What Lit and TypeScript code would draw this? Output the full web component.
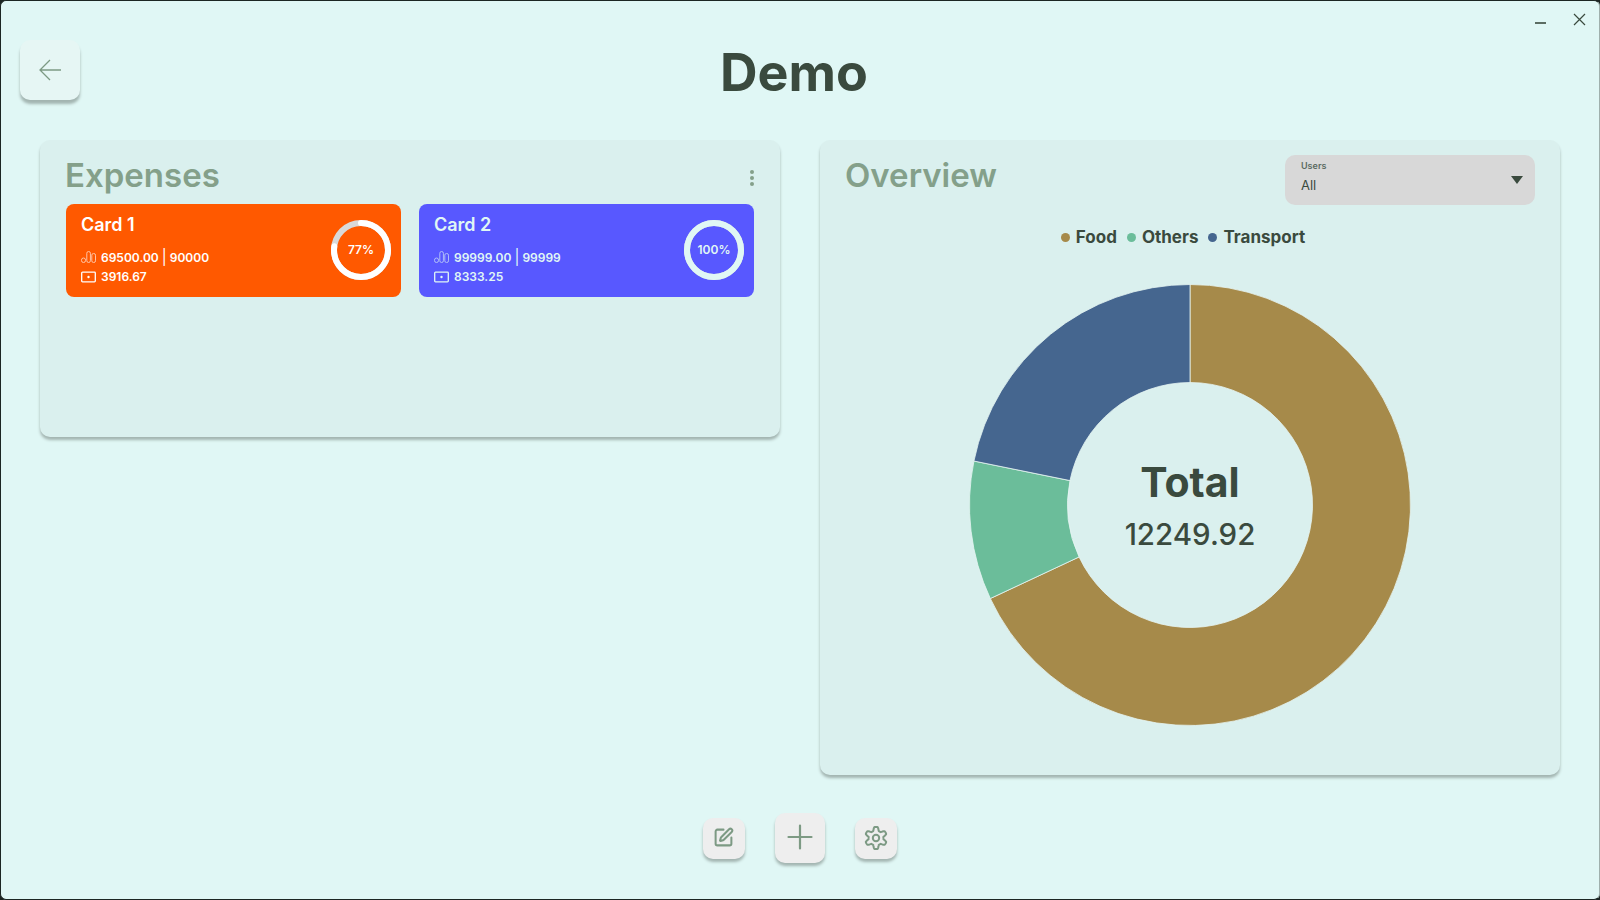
import { LitElement, css, html, svg } from 'lit';
import { customElement } from 'lit/decorators.js';

const slices = [
  { name: 'Food', color: '#a68a4a', from: 0, to: 244.9 },
  { name: 'Others', color: '#6bbd9a', from: 244.9, to: 281.5 },
  { name: 'Transport', color: '#45668f', from: 281.5, to: 360 },
];

const cards = [
  { name: 'Card 1', color: '#ff5900', fg: '#ffffff', used: '69500.00', limit: '90000', left: '3916.67', pct: 77 },
  { name: 'Card 2', color: '#5858ff', fg: '#e0f7f5', used: '99999.00', limit: '99999', left: '8333.25', pct: 100 },
];

function polar(r: number, deg: number) {
  const a = (deg * Math.PI) / 180;
  return `${(r * Math.sin(a)).toFixed(2)} ${(-r * Math.cos(a)).toFixed(2)}`;
}

function arc(from: number, to: number) {
  const R = 220.5;
  const r = 122.5;
  const large = to - from > 180 ? 1 : 0;
  return `M${polar(R, from)}A${R} ${R} 0 ${large} 1 ${polar(R, to)}L${polar(r, to)}A${r} ${r} 0 ${large} 0 ${polar(r, from)}Z`;
}

// six lobed cog outline, lobes flattened at the tips
function cog() {
  const pts: string[] = [];
  for (let d = 0; d < 360; d += 3) {
    const wave = Math.max(-1, Math.min(1, 1.6 * Math.cos((6 * d * Math.PI) / 180)));
    pts.push(polar(9.2 + 1.8 * wave, d));
  }
  return `M${pts.join('L')}Z`;
}

@customElement('app-root')
export class AppRoot extends LitElement {
  static styles = css`
    :host {
      display: block;
      width: 1600px;
      height: 900px;
      background: #1c2623;
      font-family: Inter, 'Liberation Sans', sans-serif;
      color: #3a4a3e;
    }
    .window {
      position: relative;
      box-sizing: border-box;
      width: 1600px;
      height: 900px;
      margin: 0;
      border: 1px solid #1c2623;
      border-right-color: #9fb0ad;
      border-radius: 6px;
      background: #e0f7f5;
      display: flex;
      flex-direction: column;
    }
    .controls {
      position: absolute;
      top: 8px;
      right: 10px;
      display: flex;
      gap: 18px;
      color: #3a4a3e;
    }
    .controls svg {
      display: block;
      width: 20px;
      height: 20px;
    }
    header {
      display: grid;
      grid-template-columns: 60px 1fr 60px;
      align-items: start;
      padding: 39px 31px 0 19px;
      height: 139px;
      box-sizing: border-box;
    }
    h1 {
      margin: -2px 0 0;
      text-align: center;
      font-size: 52px;
      font-weight: 700;
      line-height: 70px;
    }
    .back {
      width: 60px;
      height: 60px;
      border-radius: 10px;
      background: #e6f6f4;
      box-shadow: 0 4px 3px #a3b5b1;
      display: flex;
      align-items: center;
      justify-content: center;
      color: #7d9a84;
    }
    main {
      display: grid;
      grid-template-columns: 740px 740px;
      gap: 40px;
      padding-left: 39px;
      align-items: start;
    }
    .panel {
      box-sizing: border-box;
      background: #daf0ee;
      border-radius: 10px;
      box-shadow: 0 3px 3px #a3b5b1;
    }
    .panel-head {
      display: flex;
      align-items: flex-start;
      justify-content: space-between;
    }
    h2 {
      margin: -1px 0 0 -1px;
      font-size: 33px;
      font-weight: 600;
      line-height: 42px;
      color: #84a08a;
    }
    .expenses {
      height: 297px;
      padding: 15px 26px 0;
    }
    .expenses .panel-head {
      height: 49px;
    }
    .menu {
      width: 4px;
      display: flex;
      flex-direction: column;
      gap: 2px;
      margin: 15px 0 0 0;
    }
    .menu i {
      width: 4px;
      height: 4px;
      border-radius: 50%;
      background: #84a08a;
    }
    .cards {
      display: grid;
      grid-template-columns: 335px 335px;
      gap: 18px;
    }
    .card {
      height: 93px;
      border-radius: 8px;
      padding: 0 10px 0 15px;
      display: flex;
      align-items: center;
      justify-content: space-between;
    }
    .card h3 {
      margin: 0 0 11px;
      font-size: 18px;
      line-height: 22px;
      font-weight: 600;
    }
    .info {
      padding-bottom: 1px;
    }
    .stat {
      display: flex;
      align-items: center;
      gap: 5px;
      font-size: 12px;
      font-weight: 600;
      line-height: 19px;
    }
    .stat svg {
      display: block;
      width: 15px;
      height: 12px;
    }
    .sep {
      margin: 0 3px;
      font-size: 15px;
      font-weight: 400;
    }
    .ring {
      position: relative;
      width: 60px;
      height: 60px;
      margin-top: -1px;
      display: flex;
      align-items: center;
      justify-content: center;
      font-size: 12px;
      font-weight: 600;
    }
    .ring span {
      margin-top: -1px;
    }
    .ring svg {
      position: absolute;
      inset: 0;
    }
    .overview {
      height: 635px;
      padding: 15px 26px 0;
    }
    .overview .panel-head {
      height: 62px;
    }
    .select {
      box-sizing: border-box;
      width: 250px;
      height: 50px;
      margin-right: -1px;
      border-radius: 10px;
      background: #d8d8d8;
      padding: 5px 12px 0 16px;
      position: relative;
      color: #3a4a3e;
    }
    .select label {
      display: block;
      font-size: 9px;
      font-weight: 600;
      line-height: 12px;
      color: #5a6a62;
    }
    .select span {
      display: block;
      margin-top: 5px;
      font-size: 13px;
      line-height: 16px;
    }
    .select b {
      position: absolute;
      right: 12px;
      top: 21px;
      width: 0;
      height: 0;
      border-left: 6px solid transparent;
      border-right: 6px solid transparent;
      border-top: 8px solid #3a4a3e;
    }
    .legend {
      display: flex;
      justify-content: center;
      gap: 10px;
      font-size: 17px;
      font-weight: 700;
      line-height: 24px;
      margin-top: 8px;
      padding-right: 14px;
    }
    .legend div {
      display: flex;
      align-items: center;
      gap: 6px;
    }
    .legend i {
      width: 9px;
      height: 9px;
      border-radius: 50%;
    }
    .donut {
      position: relative;
      width: 442px;
      height: 442px;
      margin: 35px auto 0;
    }
    .donut svg {
      display: block;
    }
    .center {
      position: absolute;
      inset: 0;
      display: flex;
      flex-direction: column;
      align-items: center;
      justify-content: center;
    }
    .center strong {
      font-size: 41px;
      font-weight: 700;
      line-height: 48px;
    }
    .center span {
      font-size: 29.5px;
      font-weight: 500;
      line-height: 36px;
      margin-top: 10px;
    }
    footer {
      flex: 1;
      display: flex;
      align-items: flex-start;
      justify-content: center;
      gap: 30px;
      padding-top: 38px;
    }
    .tool {
      width: 42px;
      height: 41px;
      margin-top: 5px;
      border-radius: 10px;
      background: #eeeeee;
      box-shadow: 0 3px 3px #a3b5b1;
      display: flex;
      align-items: center;
      justify-content: center;
      color: #7d9a84;
    }
    .tool.big {
      width: 50px;
      height: 50px;
      margin-top: 0;
    }
    .tool svg {
      margin: -2px 0 0 -1px;
    }
  `;

  private renderRing(c: (typeof cards)[number]) {
    const r = 27;
    const len = 2 * Math.PI * r;
    return html`<div class="ring">
      <svg width="60" height="60" viewBox="0 0 60 60">
        <circle cx="30" cy="30" r=${r} fill="none" stroke="#d9d9d9" stroke-width="6"></circle>
        <circle
          cx="30"
          cy="30"
          r=${r}
          fill="none"
          stroke=${c.fg}
          stroke-width="6"
          stroke-linecap="round"
          stroke-dasharray="${(len * c.pct) / 100} ${len}"
          transform="rotate(-90 30 30)"
        ></circle>
      </svg>
      <span>${c.pct}%</span>
    </div>`;
  }

  private renderCard(c: (typeof cards)[number]) {
    return html`<div class="card" style="background:${c.color};color:${c.fg}">
      <div class="info">
        <h3>${c.name}</h3>
        <div class="stat">
          <svg viewBox="0 0 15 12" fill="none" stroke="currentColor" stroke-width="1" opacity="0.65">
            <rect x="0.5" y="7" width="4" height="4.5" rx="2"></rect>
            <rect x="5.8" y="0.5" width="3.6" height="11" rx="1.8"></rect>
            <rect x="10.8" y="2.5" width="3.7" height="9" rx="1.7"></rect>
          </svg>
          <span>${c.used}<span class="sep">|</span>${c.limit}</span>
        </div>
        <div class="stat">
          <svg viewBox="0 0 15 12" fill="none" stroke="currentColor" stroke-width="1.3">
            <rect x="0.7" y="1.2" width="13.6" height="9.6" rx="0.8"></rect>
            <circle cx="7.5" cy="6" r="1.2" fill="currentColor" stroke="none"></circle>
          </svg>
          <span>${c.left}</span>
        </div>
      </div>
      ${this.renderRing(c)}
    </div>`;
  }

  render() {
    return html`<div class="window">
      <div class="controls">
        <svg viewBox="0 0 20 20" fill="none" stroke="currentColor" stroke-width="1.6"><path d="M4 14h11"></path></svg>
        <svg viewBox="0 0 20 20" fill="none" stroke="currentColor" stroke-width="1.2"><path d="M5 5l11 11M16 5L5 16"></path></svg>
      </div>
      <header>
        <div class="back">
          <svg width="24" height="24" viewBox="0 0 24 24" fill="none" stroke="currentColor" stroke-width="1.3">
            <path d="M23 12H2M12 2L2 12l10 10"></path>
          </svg>
        </div>
        <h1>Demo</h1>
      </header>
      <main>
        <section class="panel expenses">
          <div class="panel-head">
            <h2>Expenses</h2>
            <div class="menu"><i></i><i></i><i></i></div>
          </div>
          <div class="cards">${cards.map((c) => this.renderCard(c))}</div>
        </section>
        <section class="panel overview">
          <div class="panel-head">
            <h2>Overview</h2>
            <div class="select">
              <label>Users</label>
              <span>All</span>
              <b></b>
            </div>
          </div>
          <div class="legend">
            ${slices.map((s) => html`<div><i style="background:${s.color}"></i>${s.name}</div>`)}
          </div>
          <div class="donut">
            <svg width="442" height="442" viewBox="-221 -221 442 442">
              ${slices.map((s) => svg`<path d=${arc(s.from, s.to)} fill=${s.color} stroke="#e6f5f2" stroke-width="0.8"></path>`)}
            </svg>
            <div class="center">
              <strong>Total</strong>
              <span>12249.92</span>
            </div>
          </div>
        </section>
      </main>
      <footer>
        <div class="tool">
          <svg width="21" height="21" viewBox="0 0 24 24" fill="none" stroke="currentColor" stroke-width="2.3" stroke-linecap="round" stroke-linejoin="round">
            <path d="M12 3H5a2 2 0 0 0-2 2v14a2 2 0 0 0 2 2h14a2 2 0 0 0 2-2v-7"></path>
            <path d="M18.375 2.625a1 1 0 0 1 3 3l-9.013 9.014a2 2 0 0 1-.853.505l-2.873.84a.5.5 0 0 1-.62-.62l.84-2.873a2 2 0 0 1 .506-.852z"></path>
          </svg>
        </div>
        <div class="tool big">
          <svg width="26" height="26" viewBox="0 0 26 26" fill="none" stroke="currentColor" stroke-width="2.2" stroke-linecap="round">
            <path d="M13 1.5v23M1.5 13h23"></path>
          </svg>
        </div>
        <div class="tool">
          <svg width="24" height="24" viewBox="-12 -12 24 24" fill="none" stroke="currentColor" stroke-width="2" stroke-linejoin="round">
            <path d=${cog()}></path>
            <circle r="3.2"></circle>
          </svg>
        </div>
      </footer>
    </div>`;
  }
}
